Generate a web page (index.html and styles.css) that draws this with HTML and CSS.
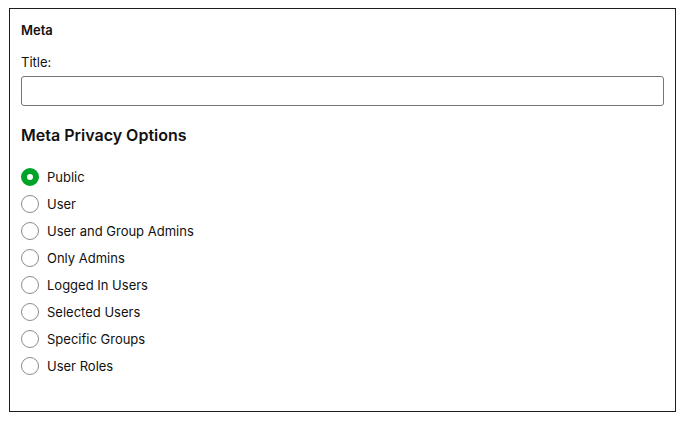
FILE: index.html
```html
<!DOCTYPE html>
<html>
<head>
<meta charset="utf-8">
<link rel="stylesheet" href="styles.css">
</head>
<body>
<div class="panel">
  <h2 class="panel-title">Meta</h2>
  <label class="field-label" for="title">Title:</label>
  <input class="text-input" id="title" type="text">
  <h3 class="section-title">Meta Privacy Options</h3>
  <ul class="options">
    <li class="option"><span class="radio checked"></span><span>Public</span></li>
    <li class="option"><span class="radio"></span><span>User</span></li>
    <li class="option"><span class="radio"></span><span>User and Group Admins</span></li>
    <li class="option"><span class="radio"></span><span>Only Admins</span></li>
    <li class="option"><span class="radio"></span><span>Logged In Users</span></li>
    <li class="option"><span class="radio"></span><span>Selected Users</span></li>
    <li class="option"><span class="radio"></span><span>Specific Groups</span></li>
    <li class="option"><span class="radio"></span><span>User Roles</span></li>
  </ul>
</div>
</body>
</html>
```

FILE: styles.css
```css
html, body { margin: 0; background: #fff; }
body {
  padding: 8px 11px 0 9px;
  font-family: Inter, "Liberation Sans", sans-serif;
  font-size: 13px;
  color: #111;
}
.panel {
  border: 1px solid #1e1e1e;
  padding: 11px 11px 0 11px;
  height: 391px;
  box-sizing: content-box;
  display: flex;
  flex-direction: column;
}
.panel-title {
  margin: 2px 0 0;
  font-size: 13px;
  font-weight: 600;
  line-height: 16px;
}
.field-label {
  margin-top: 16px;
  line-height: 16px;
  display: block;
}
.text-input {
  margin: 6px 0 0;
  height: 30px;
  box-sizing: border-box;
  border: 1px solid #757575;
  border-radius: 3px;
  width: 100%;
  font: inherit;
}
.section-title {
  margin: 19px 0 0;
  font-size: 16px;
  font-weight: 600;
  line-height: 20px;
}
.options {
  list-style: none;
  margin: 23px 0 0;
  padding: 0;
  display: flex;
  flex-direction: column;
  gap: 9px;
}
.option {
  display: flex;
  align-items: center;
  gap: 8px;
  height: 18px;
}
.radio {
  width: 18px;
  height: 18px;
  box-sizing: border-box;
  border: 1px solid #8c8c8c;
  border-radius: 50%;
  flex: none;
}
.radio.checked {
  border: 6px solid #00a32a;
  background: #fff;
}
```
